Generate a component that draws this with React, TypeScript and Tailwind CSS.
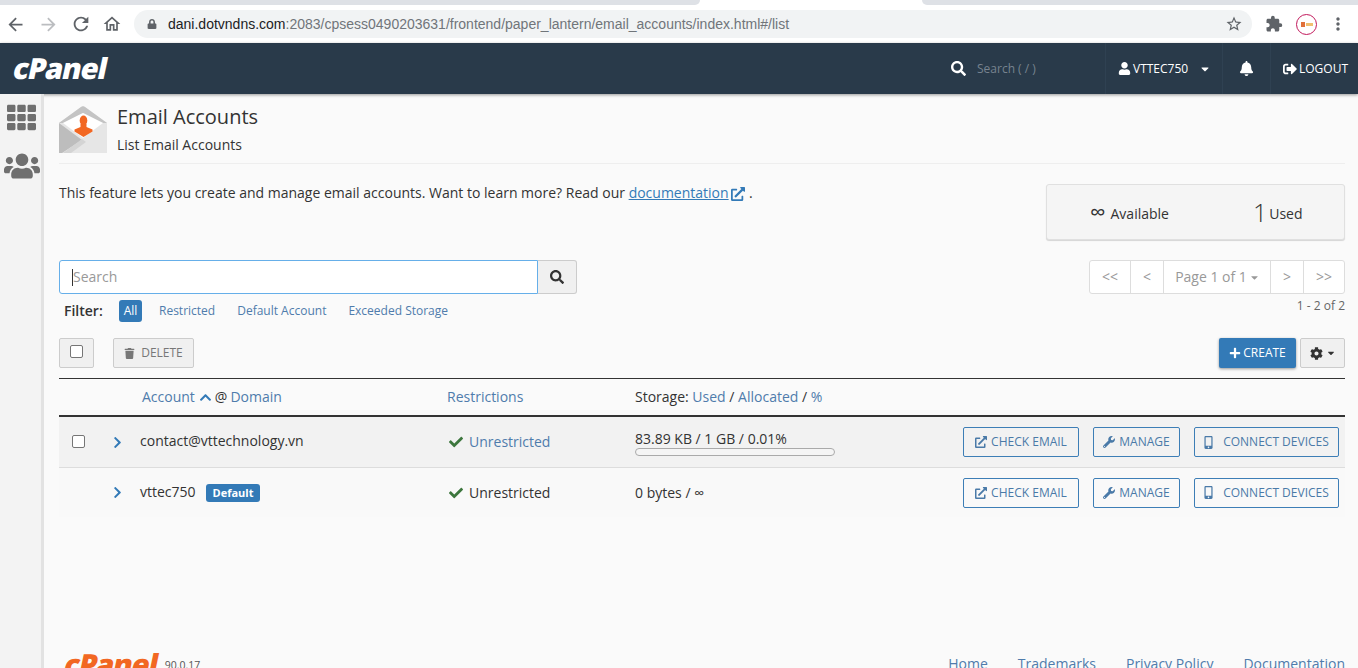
import {
  FaBell,
  FaCaretDown,
  FaCheck,
  FaChevronRight,
  FaChevronUp,
  FaCog,
  FaExternalLinkAlt,
  FaLock,
  FaMobileAlt,
  FaPlus,
  FaSearch,
  FaSignOutAlt,
  FaTh,
  FaTrash,
  FaUser,
  FaUsers,
  FaWrench,
} from "react-icons/fa";
import {
  MdArrowBack,
  MdArrowForward,
  MdExtension,
  MdMoreVert,
  MdOutlineHome,
  MdRefresh,
  MdStarBorder,
} from "react-icons/md";

const font = { fontFamily: '"Open Sans", sans-serif' };

function EnvelopeIcon() {
  return (
    <svg width="48" height="48" viewBox="0 0 48 48" className="shrink-0">
      <path d="M0 17 L22 1 Q24 -0.5 26 1 L48 17 L48 47 L0 47 Z" fill="#e6e6e6" />
      <path d="M0 17 L22 1 Q24 -0.5 26 1 L48 17 L44 17 L24 7 L4 17 Z" fill="#c4c4c4" />
      <path d="M0 17 L23 34 L3 47 L0 47 Z" fill="#bdbdbd" />
      <path d="M4 47 L23 33 L27 36 L12 47 Z" fill="#d4d4d4" />
      <path d="M24 7 L44 17 L24 32 L4 17 Z" fill="#ffffff" />
      <ellipse cx="24.5" cy="14.5" rx="3.8" ry="5" fill="#f26722" />
      <path d="M21.5 18 H27.5 V21 L33.5 23.5 V25.5 L24.5 31 L15.5 25.5 V23.5 L21.5 21 Z" fill="#f26722" />
    </svg>
  );
}

function ActionButtons() {
  const cls =
    "flex h-[30px] items-center justify-center gap-[4px] rounded-[2px] border border-[#3d7eb6] bg-transparent text-xs text-[#4a7aa8]";
  return (
    <div className="flex items-center justify-end gap-[14px] pr-[6px]">
      <button className={`${cls} w-[116px]`}>
        <FaExternalLinkAlt size={12} />
        CHECK EMAIL
      </button>
      <button className={`${cls} w-[87px]`}>
        <FaWrench size={12} />
        MANAGE
      </button>
      <button className={`${cls} w-[145px] pr-[2px] gap-[8px]`}>
        <FaMobileAlt size={13} />
        CONNECT DEVICES
      </button>
    </div>
  );
}

export default function App() {
  return (
    <div className="flex h-[668px] flex-col overflow-hidden bg-[#fafafa] text-[#333]" style={font}>
      {/* browser chrome */}
      <div className="flex h-[5px] shrink-0 bg-white">
        <div className="w-[700px] rounded-br-[5px] bg-[#dee1e6]" />
        <div className="w-[222px]" />
        <div className="flex-1 rounded-bl-[5px] bg-[#dee1e6]" />
      </div>
      <div className="flex h-[38px] shrink-0 items-center bg-white pl-[5px] text-[#5f6368]">
        <MdArrowBack size={21} />
        <MdArrowForward size={21} className="ml-[12px] text-[#bbbdc0]" />
        <MdRefresh size={22} className="ml-[11px]" />
        <MdOutlineHome size={20} className="ml-[10px]" />
        <div className="ml-[12px] flex h-[28px] w-[1118px] items-center rounded-full bg-[#f1f3f4] pl-[13px] pr-[9px]">
          <FaLock size={10} />
          <span
            className="ml-[11px] text-sm text-[#70757a]"
            style={{ fontFamily: '"Liberation Sans", sans-serif' }}
          >
            <span className="text-[#202124]">dani.dotvndns.com</span>:2083/cpsess0490203631/frontend/paper_lantern/email_accounts/index.html#/list
          </span>
          <MdStarBorder size={18} className="ml-auto" />
        </div>
        <MdExtension size={18} className="ml-[13px]" />
        <div className="ml-[13px] flex h-[21px] w-[21px] items-center justify-center gap-px rounded-full border-[1.5px] border-[#c2185b] bg-white">
          <span className="h-[5px] w-[4px] bg-[#e0703a]" />
          <span className="h-[3px] w-[7px] bg-[#f0c070]" />
        </div>
        <MdMoreVert size={20} className="ml-[11px]" />
      </div>

      {/* cPanel top bar */}
      <header className="flex h-[51px] shrink-0 items-center bg-[#293a4a] pl-[14px] text-white shadow-[0_1px_3px_rgba(0,0,0,0.4)]">
        <span className="-mt-[2px] -skew-x-12 text-[29px] font-extrabold leading-none tracking-[-1px]">
          cPanel
        </span>
        <div className="ml-auto flex h-full items-center">
          <FaSearch size={15} className="mr-[11px]" />
          <span className="w-[128px] text-xs text-[#77838f]">Search ( / )</span>
          <div className="flex h-full w-[117px] items-center border-l border-[#2f4152] pl-[12px] text-xs">
            <FaUser size={13} className="mr-[2px]" />
            VTTEC750
            <FaCaretDown size={12} className="ml-[11px]" />
          </div>
          <div className="flex h-full w-[49px] items-center justify-center border-x border-[#2f4152]">
            <FaBell size={15} />
          </div>
          <div className="flex h-full w-[87px] items-center pl-[12px] text-xs">
            <FaSignOutAlt size={14} className="mr-[2px]" />
            LOGOUT
          </div>
        </div>
      </header>

      <div className="flex min-h-0 flex-1">
        {/* sidebar */}
        <aside className="flex w-[44px] shrink-0 flex-col items-center gap-[16px] border-r-[3px] border-[#e2e2e2] bg-[#f3f3f3] pl-[2px] pt-[9px] text-[#6f6f6f]">
          <FaTh size={29} />
          <FaUsers size={36} />
        </aside>

        {/* main */}
        <main className="min-w-0 flex-1 pl-[15px] pr-[13px] pt-[12px]">
          <div className="flex h-[58px] gap-[10px] border-b border-[#eeeeee]">
            <EnvelopeIcon />
            <div className="-mt-[3px]">
              <h1 className="text-[20px] leading-[27px] text-[#333]">Email Accounts</h1>
              <p className="mt-[5px] text-sm leading-[19px]">List Email Accounts</p>
            </div>
          </div>

          <div className="flex justify-between pt-[19px]">
            <p className="text-sm leading-[19px]">
              This feature lets you create and manage email accounts. Want to learn more? Read our{" "}
              <a className="text-[#337ab7] underline">documentation</a>{" "}
              <FaExternalLinkAlt size={14} className="-ml-[1px] inline text-[#337ab7]" /> .
            </p>
            <div className="mt-[1px] flex h-[56px] w-[299px] items-center rounded-[3px] border border-[#e0e0e0] bg-[#f5f5f5] pl-[43px] shadow-[0_1px_1px_rgba(0,0,0,0.15)]">
              <span className="-mt-[3px] text-[22px] leading-none">∞</span>
              <span className="ml-[5px] mt-[3px] text-sm">Available</span>
              <span className="ml-[84px] text-[25px] font-light leading-none">1</span>
              <span className="ml-[2px] mt-[3px] text-sm">Used</span>
            </div>
          </div>

          <div className="mt-[20px] flex items-start justify-between">
            <div>
              <div className="flex h-[34px] w-[518px]">
                <div className="flex flex-1 items-center rounded-l-[3px] border border-[#66afe9] bg-white pl-[12px] text-sm text-[#999]">
                  <span className="h-[17px] w-px bg-[#333]" />
                  Search
                </div>
                <div className="flex w-[39px] items-center justify-center rounded-r-[3px] border border-l-0 border-[#cccccc] bg-[#f0f0f0]">
                  <FaSearch size={14} className="text-[#333]" />
                </div>
              </div>
              <div className="mt-[6px] flex h-[22px] items-center pl-[5px] text-xs text-[#4f7cac]">
                <span className="mr-[14px] w-[41px] text-sm font-semibold text-[#333]">Filter:</span>
                <span className="mr-[17px] flex h-[22px] w-[23px] items-center justify-center rounded-[3px] bg-[#337ab7] text-white">
                  All
                </span>
                <span className="mr-[22px]">Restricted</span>
                <span className="mr-[22px]">Default Account</span>
                <span>Exceeded Storage</span>
              </div>
            </div>
            <div className="flex flex-col items-end">
              <div className="flex h-[34px] items-center rounded-[3px] border border-[#dddddd] bg-white text-sm text-[#999]">
                <span className="flex h-full w-[41px] items-center justify-center border-r border-[#dddddd]">&lt;&lt;</span>
                <span className="flex h-full w-[33px] items-center justify-center border-r border-[#dddddd]">&lt;</span>
                <span className="flex h-full w-[107px] items-center justify-center border-r border-[#dddddd] pl-[1px]">
                  Page 1 of 1<FaCaretDown size={11} className="ml-[2px]" />
                </span>
                <span className="flex h-full w-[33px] items-center justify-center border-r border-[#dddddd]">&gt;</span>
                <span className="flex h-full w-[40px] items-center justify-center">&gt;&gt;</span>
              </div>
              <span className="mt-[4px] text-xs text-[#666]">1 - 2 of 2</span>
            </div>
          </div>

          <div className="mt-[16px] flex h-[41px] items-start justify-between border-b border-[#333]">
            <div className="flex items-center gap-[19px]">
              <div className="flex h-[30px] w-[35px] items-center justify-center rounded-[2px] border border-[#cccccc] bg-[#f0f0f0]">
                <span className="-mt-[3px] h-[13px] w-[13px] rounded-[2px] border border-[#767676] bg-white" />
              </div>
              <button className="flex h-[30px] w-[81px] items-center justify-center gap-[6px] rounded-[2px] border border-[#cccccc] bg-[#f0f0f0] text-xs text-[#777]">
                <FaTrash size={11} />
                DELETE
              </button>
            </div>
            <div className="flex items-center gap-[4px]">
              <button className="flex h-[30px] w-[77px] items-center justify-center gap-[2px] rounded-[2px] bg-[#337ab7] text-xs text-white shadow-[0_1px_3px_rgba(0,0,0,0.4)]">
                <FaPlus size={12} />
                CREATE
              </button>
              <button className="flex h-[30px] w-[45px] items-center justify-center gap-[3px] rounded-[2px] border border-[#cccccc] bg-[#f0f0f0] text-[#333]">
                <FaCog size={13} />
                <FaCaretDown size={10} />
              </button>
            </div>
          </div>

          {/* table */}
          <div className="grid h-[38px] grid-cols-[81px_307px_188px_1fr] items-center border-b-2 border-[#333] text-sm text-[#4f7cac]">
            <span />
            <span className="flex items-center pl-[2px]">
              Account
              <FaChevronUp size={13} className="ml-[4px] text-[#337ab7]" />
              <span className="ml-[3px] mr-[3px] text-[#333]">@</span>
              Domain
            </span>
            <span>Restrictions</span>
            <span>
              <span className="text-[#333]">Storage:</span> Used <span className="text-[#333]">/</span> Allocated{" "}
              <span className="text-[#333]">/</span> %
            </span>
          </div>

          <div className="grid h-[51px] grid-cols-[81px_307px_188px_1fr] items-center border-b border-[#dddddd] bg-[#f2f2f2] text-sm">
            <div className="flex items-center pl-[13px]">
              <span className="-mt-[2px] h-[13px] w-[13px] rounded-[2px] border border-[#767676] bg-white" />
              <FaChevronRight size={13} className="ml-[26px] text-[#337ab7]" />
            </div>
            <span className="-mt-[3px]">contact@vttechnology.vn</span>
            <span className="flex items-center gap-[6px] pl-[2px] text-[#4f7cac]">
              <FaCheck size={14} className="text-[#3c763d]" />
              Unrestricted
            </span>
            <div className="grid grid-cols-[200px_1fr] items-center">
              <div>
                <div className="leading-[19px]">83.89 KB / 1 GB / 0.01%</div>
                <div className="h-[8px] rounded-full border border-[#aaaaaa] bg-[#f5f5f5]" />
              </div>
              <ActionButtons />
            </div>
          </div>

          <div className="grid h-[49px] grid-cols-[81px_307px_188px_1fr] items-center bg-[#f9f9f9] text-sm">
            <div className="flex items-center pl-[52px]">
              <FaChevronRight size={13} className="text-[#337ab7]" />
            </div>
            <span className="flex items-center gap-[10px]">
              <span className="-mt-[2px]">vttec750</span>
              <span className="rounded-[3px] bg-[#337ab7] px-[7px] py-[2px] text-[11px] font-bold leading-[14px] text-white">
                Default
              </span>
            </span>
            <span className="flex items-center gap-[6px] pl-[2px]">
              <FaCheck size={14} className="text-[#3c763d]" />
              Unrestricted
            </span>
            <div className="grid grid-cols-[200px_1fr] items-center">
              <div>0 bytes / ∞</div>
              <ActionButtons />
            </div>
          </div>

          {/* footer, cut off by the window */}
          <div className="mt-[132px] flex items-start justify-between">
            <div className="flex items-start pl-[6px]">
              <span className="-skew-x-12 text-[29px] font-extrabold leading-none tracking-[-1px] text-[#f26722]">
                cPanel
              </span>
              <span className="ml-[7px] mt-[9px] text-[10.5px] text-[#555]">90.0.17</span>
            </div>
            <div className="flex gap-[30px] pt-[5px] text-sm text-[#4f7cac]">
              <span>Home</span>
              <span>Trademarks</span>
              <span>Privacy Policy</span>
              <span>Documentation</span>
            </div>
          </div>
        </main>
      </div>
    </div>
  );
}
